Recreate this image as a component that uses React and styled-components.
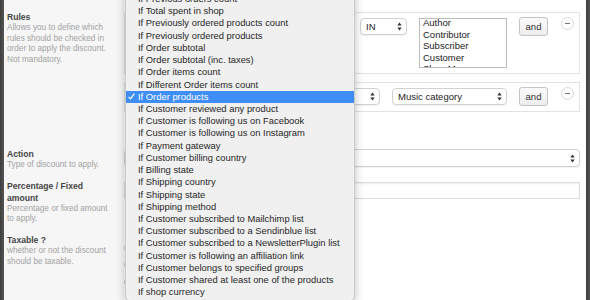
import React from 'react'
import styled, { createGlobalStyle } from 'styled-components'

const GlobalStyle = createGlobalStyle`
  html, body {
    margin: 0;
    padding: 0;
  }
  body {
    width: 590px;
    height: 300px;
    overflow: hidden;
    background: #fff;
    font-family: "Liberation Sans", Arial, sans-serif;
  }
`

const rules = [
  'If Previous orders count',
  'If Total spent in shop',
  'If Previously ordered products count',
  'If Previously ordered products',
  'If Order subtotal',
  'If Order subtotal (inc. taxes)',
  'If Order items count',
  'If Different Order items count',
  'If Order products',
  'If Customer reviewed any product',
  'If Customer is following us on Facebook',
  'If Customer is following us on Instagram',
  'If Payment gateway',
  'If Customer billing country',
  'If Billing state',
  'If Shipping country',
  'If Shipping state',
  'If Shipping method',
  'If Customer subscribed to Mailchimp list',
  'If Customer subscribed to a Sendinblue list',
  'If Customer subscribed to a NewsletterPlugin list',
  'If Customer is following an affiliation link',
  'If Customer belongs to specified groups',
  'If Customer shared at least one of the products',
  'If shop currency',
]

const roles = ['Author', 'Contributor', 'Subscriber', 'Customer', 'Shop Manager']

const Arrows = () => (
  <svg width="5" height="9" viewBox="0 0 5 9">
    <path d="M2.5 0.5 L4.7 3.6 L0.3 3.6 Z M2.5 8.5 L4.7 5.4 L0.3 5.4 Z" fill="#333" />
  </svg>
)

const Check = () => (
  <svg width="7" height="7" viewBox="0 0 7 7">
    <path d="M0.6 3.9 L2.5 5.9 L6.4 0.6" fill="none" stroke="#fff" strokeWidth="1.2" />
  </svg>
)

// the part of a select that hides under the open menu has no text shown
const Select = ({ width, value, tall }) => (
  <SelectBox $width={width} $tall={tall}>
    <span>{value}</span>
    <Arrows />
  </SelectBox>
)

const App = () => {
  return <Frame>
    <GlobalStyle />
    <Edge />
    <Form>
      {/* rules */}
      <Label>
        <h4>Rules</h4>
        <p>Allows you to define which<br />rules should be checked in<br />order to apply the discount.<br />Not mandatory.</p>
      </Label>
      <Field $bottom={27}>
        <RuleBox>
          <Select width={218} />
          <Select width={47} value="IN" />
          <ListBox>
            <div>
              {roles.map(r => <div key={r}>{r}</div>)}
            </div>
          </ListBox>
          <AndButton>and</AndButton>
          <Minus />
        </RuleBox>
        <RuleBox>
          <Select width={191} />
          <Select width={47} />
          <Select width={115} value="Music category" />
          <AndButton>and</AndButton>
          <Minus />
        </RuleBox>
      </Field>

      {/* action */}
      <Label>
        <h4>Action</h4>
        <p>Type of discount to apply.</p>
      </Label>
      <Field>
        <Select tall />
      </Field>

      {/* amount */}
      <Label>
        <h4>Percentage / Fixed<br />amount</h4>
        <p>Percentage or fixed amount<br />to apply.</p>
      </Label>
      <Field>
        <TextInput />
      </Field>

      {/* taxable */}
      <Label>
        <h4>Taxable ?</h4>
        <p>whether or not the discount<br />should be taxable.</p>
      </Label>
      <Field>
        <Radios>
          <Radio />
          <Radio />
          <Radio />
        </Radios>
      </Field>
    </Form>
    <Edge />

    <Menu>
      {rules.map(r => (
        <MenuItem key={r} $active={r === 'If Order products'}>
          {r === 'If Order products' && <Tick><Check /></Tick>}
          {r}
        </MenuItem>
      ))}
    </Menu>
  </Frame>
}

const Frame = styled.div`
  position: relative;
  display: flex;
  width: 590px;
  height: 300px;
  overflow: hidden;
`

const Edge = styled.div`
  width: 4px;
  flex: none;
  background: linear-gradient(to right, #3e3e3e, #555);
`

const Form = styled.div`
  flex: 1;
  display: grid;
  grid-template-columns: 120px 1fr;
  row-gap: 9px;
  align-content: start;
  padding: 11px 6px 0 0;
  background: linear-gradient(to right, #f6f6f6 120px, #fff 120px);
`

const Label = styled.div`
  padding-left: 3px;
  h4 {
    margin: 0;
    font-size: 8.6px;
    line-height: 12px;
    font-weight: bold;
    color: #454545;
  }
  p {
    margin: 0;
    font-size: 8.2px;
    line-height: 10.7px;
    color: #a2a2a2;
  }
`

const Field = styled.div`
  padding-top: 1px;
  padding-bottom: ${p => p.$bottom || 0}px;
  display: flex;
  flex-direction: column;
  gap: 8px;
`

const RuleBox = styled.div`
  display: flex;
  align-items: flex-start;
  gap: 12px;
  padding: 5px;
  border: 1px solid #e2e2e2;
  background: #fff;
`

const SelectBox = styled.div`
  box-sizing: border-box;
  width: ${p => p.$width ? `${p.$width}px` : 'auto'};
  height: ${p => p.$tall ? 18 : 17}px;
  flex: none;
  display: flex;
  align-items: center;
  justify-content: space-between;
  padding: 0 4px 0 5px;
  border: 1px solid #d2d2d2;
  border-radius: 4px;
  background: #fff;
  box-shadow: 0 1px 1px rgba(0, 0, 0, 0.06);
  font-size: 9.5px;
  color: #222;
  white-space: nowrap;
  overflow: hidden;
`

const ListBox = styled.div`
  box-sizing: border-box;
  width: 88px;
  height: 50px;
  flex: none;
  overflow: hidden;
  border: 1px solid #bcbcbc;
  background: #fff;
  padding: 0 3px;
  font-size: 9.5px;
  line-height: 11.6px;
  color: #222;
  > div {
    margin-top: -2px;
  }
`

const AndButton = styled.div`
  box-sizing: border-box;
  width: 29px;
  height: 19px;
  flex: none;
  margin-top: -1px;
  display: flex;
  align-items: center;
  justify-content: center;
  border: 1px solid #c4c4c4;
  border-radius: 3px;
  background: linear-gradient(#fbfbfb, #ededed);
  font-size: 9.5px;
  color: #333;
`

const Minus = styled.div`
  box-sizing: border-box;
  width: 13px;
  height: 13px;
  flex: none;
  margin-left: auto;
  margin-top: -1px;
  border: 1px solid #d8d8d8;
  border-radius: 50%;
  background: #fff;
  display: flex;
  align-items: center;
  justify-content: center;
  &::after {
    content: '';
    width: 5px;
    height: 1px;
    background: #777;
  }
`

const TextInput = styled.div`
  box-sizing: border-box;
  height: 17px;
  margin-top: 1px;
  border: 1px solid #dcdcdc;
  background: #fff;
  box-shadow: inset 0 1px 2px rgba(0, 0, 0, 0.07);
`

const Radios = styled.div`
  display: flex;
  flex-direction: column;
  gap: 7px;
  padding-top: 8px;
`

const Radio = styled.div`
  box-sizing: border-box;
  width: 10px;
  height: 10px;
  border: 1px solid #ccc;
  border-radius: 50%;
  background: #fff;
`

const Menu = styled.div`
  position: absolute;
  left: 125px;
  top: -12px;
  width: 230px;
  box-sizing: border-box;
  padding: 4px 0 2px;
  background: #f0f0f0;
  border: 1px solid rgba(0, 0, 0, 0.16);
  border-radius: 5px;
  box-shadow: 0 3px 10px rgba(0, 0, 0, 0.25);
`

const MenuItem = styled.div`
  position: relative;
  height: 12.22px;
  line-height: 12.22px;
  padding-left: 12px;
  font-size: 9.4px;
  white-space: nowrap;
  color: ${p => p.$active ? '#fff' : '#262626'};
  background: ${p => p.$active ? '#3f8ef7' : 'transparent'};
`

const Tick = styled.span`
  position: absolute;
  left: 2px;
  top: 2px;
  display: flex;
`

export default App
